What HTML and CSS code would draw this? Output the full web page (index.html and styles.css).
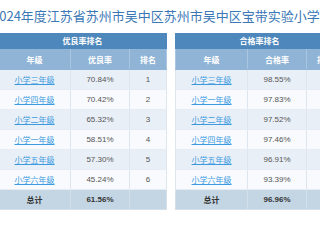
FILE: index.html
```html
<!DOCTYPE html>
<html lang="zh-CN">
<head>
  <meta charset="UTF-8" />
  <title>年级排名</title>
  <link rel="stylesheet" href="styles.css">
</head>
<body>

<div class="page">
  <h1 class="title">2024年度江苏省苏州市吴中区苏州市吴中区宝带实验小学各年级体质健康测试情况</h1>

  <div class="tables">
    <table class="rank-table">
      <colgroup>
        <col class="col-grade">
        <col class="col-rate">
        <col class="col-rank">
      </colgroup>
      <thead>
        <tr class="head-main"><th colspan="3">优良率排名</th></tr>
        <tr class="head-sub"><th>年级</th><th>优良率</th><th>排名</th></tr>
      </thead>
      <tbody>
        <tr><td><a href="#">小学三年级</a></td><td>70.84%</td><td>1</td></tr>
        <tr><td><a href="#">小学四年级</a></td><td>70.42%</td><td>2</td></tr>
        <tr><td><a href="#">小学二年级</a></td><td>65.32%</td><td>3</td></tr>
        <tr><td><a href="#">小学一年级</a></td><td>58.51%</td><td>4</td></tr>
        <tr><td><a href="#">小学五年级</a></td><td>57.30%</td><td>5</td></tr>
        <tr><td><a href="#">小学六年级</a></td><td>45.24%</td><td>6</td></tr>
        <tr class="total"><td>总计</td><td>61.56%</td><td></td></tr>
      </tbody>
    </table>

    <table class="rank-table">
      <colgroup>
        <col class="col-grade">
        <col class="col-rate">
        <col class="col-rank">
      </colgroup>
      <thead>
        <tr class="head-main"><th colspan="3">合格率排名</th></tr>
        <tr class="head-sub"><th>年级</th><th>合格率</th><th>排名</th></tr>
      </thead>
      <tbody>
        <tr><td><a href="#">小学三年级</a></td><td>98.55%</td><td>1</td></tr>
        <tr><td><a href="#">小学一年级</a></td><td>97.83%</td><td>2</td></tr>
        <tr><td><a href="#">小学二年级</a></td><td>97.52%</td><td>3</td></tr>
        <tr><td><a href="#">小学四年级</a></td><td>97.46%</td><td>4</td></tr>
        <tr><td><a href="#">小学五年级</a></td><td>96.91%</td><td>5</td></tr>
        <tr><td><a href="#">小学六年级</a></td><td>93.39%</td><td>6</td></tr>
        <tr class="total"><td>总计</td><td>96.96%</td><td></td></tr>
      </tbody>
    </table>
  </div>
</div>

</body>
</html>
```

FILE: styles.css
```css
body {
  margin: 0;
  background: #fff;
  font-family: "Noto Sans CJK SC", "Liberation Sans", sans-serif;
  overflow: hidden;
}

.page {
  width: 344px;
  margin-left: -2px;
}

.title {
  margin: 0;
  padding-top: 6px;
  margin-left: -6px;
  height: 27px;
  box-sizing: border-box;
  font-size: 13px;
  line-height: 20px;
  font-weight: normal;
  color: #3c78b6;
  white-space: nowrap;
}

.tables {
  display: flex;
  gap: 8px;
  margin-top: 6px;
}

.rank-table {
  width: 168px;
  table-layout: fixed;
  border-collapse: collapse;
  font-family: "Liberation Sans", "Noto Sans CJK SC", sans-serif;
  font-size: 8px;
  color: #555;
  text-align: center;
}

.col-grade { width: 72px; }
.col-rate { width: 59px; }
.col-rank { width: 37px; }

.rank-table th,
.rank-table td {
  padding: 0;
  border: 1px solid #dde5ee;
  border-top: 0;
  border-bottom: 1px solid #e6ecf3;
}

.head-main th {
  height: 15px;
  background: #4d87bb;
  color: #fff;
  font-weight: bold;
  border-color: #4d87bb;
}

.head-sub th {
  height: 20px;
  background: #8fb4d6;
  color: #fff;
  font-weight: bold;
  border-color: #a9c7e2;
  border-bottom-color: #8fb4d6;
}

.rank-table tbody tr td {
  height: 19px;
  background: #f8fafd;
}

.rank-table tbody tr:nth-child(odd) td {
  background: #e9eff7;
}

.rank-table a {
  color: #3c9be0;
  text-decoration: underline;
}

.rank-table tbody tr.total td {
  height: 19px;
  background: #c4d6e4;
  color: #333;
  font-weight: bold;
  border-color: #d3e0ea;
}
```
